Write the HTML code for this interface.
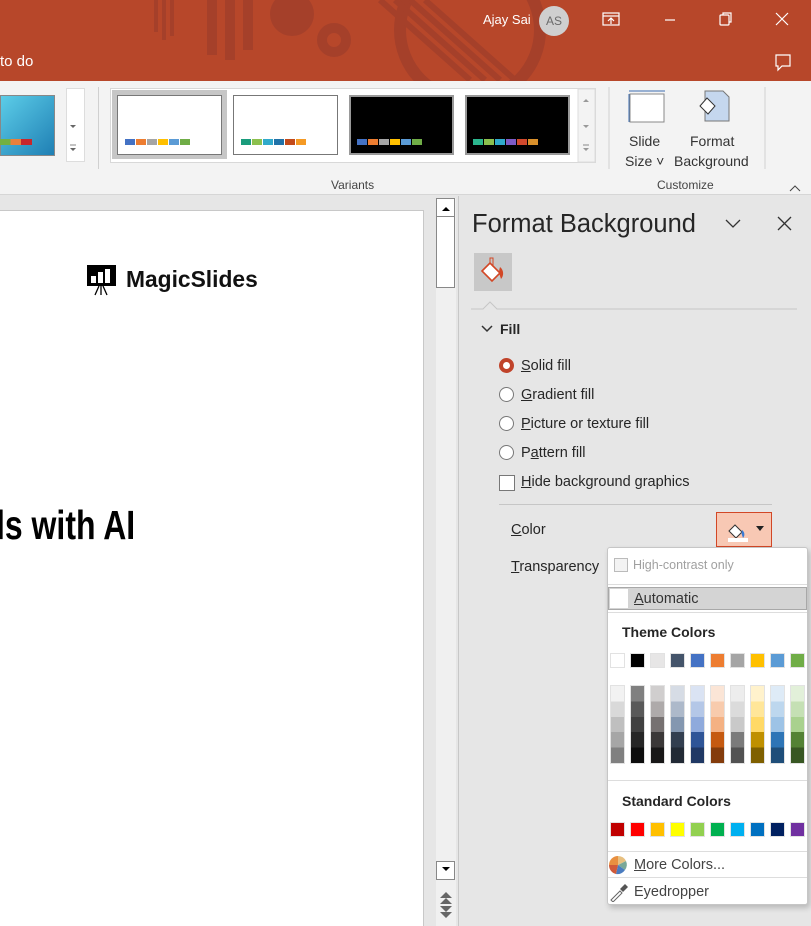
<!DOCTYPE html>
<html><head><meta charset="utf-8"><style>
*{margin:0;padding:0;box-sizing:border-box}
body{width:811px;height:926px;overflow:hidden;position:relative;font-family:"Liberation Sans",sans-serif;background:#e6e6e6;color:#262626}
.a{position:absolute}
.t{position:absolute;white-space:nowrap;font-size:14.5px;line-height:1}
.sw{position:absolute;width:15px;height:15px;border:1px solid #e2e2e2}
.radio{position:absolute;width:15px;height:15px;border-radius:50%;border:1px solid #777;background:#fff}
u{text-decoration:underline}
</style></head><body>
<div class="a" style="left:0;top:0;width:811px;height:81px;background:#b7472a;overflow:hidden">
<svg width="811" height="81" class="a" style="left:0;top:0">
<g fill="#a5402a">
<rect x="154" y="0" width="4" height="32"/><rect x="162" y="0" width="4" height="40"/><rect x="170" y="0" width="4" height="36"/>
<rect x="207" y="0" width="10" height="55"/><rect x="225" y="0" width="10" height="60"/><rect x="243" y="0" width="10" height="50"/>
<circle cx="292" cy="14" r="22"/>
</g>
<g fill="none" stroke="#a5402a">
<circle cx="334" cy="40" r="12" stroke-width="10"/>
<circle cx="470" cy="30" r="70" stroke-width="12"/>
<path d="M380 0 L470 80 M395 0 L485 80 M410 0 L500 80 M425 0 L515 80" stroke-width="6"/>
</g>
</svg>
<div class="t" style="left:0;top:54px;color:#fff;font-size:15px">to do</div>
<div class="t" style="left:483px;top:13px;color:#fff;font-size:13px">Ajay Sai</div>
<div class="a" style="left:539px;top:6px;width:30px;height:30px;border-radius:50%;background:#cfcfcf;color:#6a6a6a;font-size:12px;text-align:center;line-height:30px">AS</div>
<svg class="a" style="left:600px;top:8px" width="200" height="70" fill="none" stroke="#fff" stroke-width="1.2">
<rect x="3" y="5" width="16" height="12"/><line x1="3" y1="8" x2="19" y2="8"/><path d="M11 16V10M8 13l3-3 3 3"/>
<line x1="65" y1="12" x2="75" y2="12"/>
<rect x="120" y="7" width="9" height="10" rx="1"/><path d="M123 7V5h8v9h-2"/>
<path d="M176 5l12 12M188 5l-12 12"/>
<path d="M176 47h14v11h-8l-4 4v-4h-2z"/>
</svg>
</div>
<div class="a" style="left:0;top:81px;width:811px;height:114px;background:#f3f3f3;border-bottom:1px solid #d6d6d6">
<div class="a" style="left:0;top:14px;width:55px;height:61px;border:1px solid #888;background:linear-gradient(135deg,#5ccde8,#1f7fb4)"></div>
<div class="a" style="left:0;top:58px;width:32px;height:6px;background:linear-gradient(90deg,#73b043 0 33%,#e9803c 33% 66%,#c8262b 66%)"></div>
<div class="a" style="left:66px;top:7px;width:19px;height:74px;border:1px solid #ddd;background:#fff"></div>
<div class="a" style="left:98px;top:6px;width:1px;height:82px;background:#d0d0d0"></div>
<div class="a" style="left:110px;top:7px;width:486px;height:75px;border:1px solid #d8d8d8;background:#fff"></div>
<div class="a" style="left:112px;top:9px;width:115px;height:69px;background:#c6c6c6"></div>
<div class="a" style="left:117px;top:14px;width:105px;height:60px;background:#fff;border:1px solid #777"></div>
<div class="a" style="left:233px;top:14px;width:105px;height:60px;background:#fff;border:1px solid #777"></div>
<div class="a" style="left:349px;top:14px;width:105px;height:60px;background:#000;border:2px solid #999"></div>
<div class="a" style="left:465px;top:14px;width:105px;height:60px;background:#000;border:2px solid #999"></div>
<svg class="a" style="left:0;top:0" width="811" height="114">
<g transform="translate(125,58)"><rect width="10" height="6" fill="#4472c4"/><rect x="11" width="10" height="6" fill="#ed7d31"/><rect x="22" width="10" height="6" fill="#a5a5a5"/><rect x="33" width="10" height="6" fill="#ffc000"/><rect x="44" width="10" height="6" fill="#5b9bd5"/><rect x="55" width="10" height="6" fill="#70ad47"/></g>
<g transform="translate(241,58)"><rect width="10" height="6" fill="#1a9c7c"/><rect x="11" width="10" height="6" fill="#8cc04e"/><rect x="22" width="10" height="6" fill="#30aacb"/><rect x="33" width="10" height="6" fill="#2072a8"/><rect x="44" width="10" height="6" fill="#c34a1a"/><rect x="55" width="10" height="6" fill="#f59a24"/></g>
<g transform="translate(357,58)"><rect width="10" height="6" fill="#4472c4"/><rect x="11" width="10" height="6" fill="#ed7d31"/><rect x="22" width="10" height="6" fill="#a5a5a5"/><rect x="33" width="10" height="6" fill="#ffc000"/><rect x="44" width="10" height="6" fill="#5b9bd5"/><rect x="55" width="10" height="6" fill="#70ad47"/></g>
<g transform="translate(473,58)"><rect width="10" height="6" fill="#2bb68e"/><rect x="11" width="10" height="6" fill="#8cc04e"/><rect x="22" width="10" height="6" fill="#30aacb"/><rect x="33" width="10" height="6" fill="#7d5bc6"/><rect x="44" width="10" height="6" fill="#d1492d"/><rect x="55" width="10" height="6" fill="#d9902b"/></g>
<rect x="578" y="8" width="17" height="73" fill="#f3f3f3" stroke="#ddd"/>
<path d="M583 21h6l-3-3z M583 44h6l-3 3z M583 67h6l-3 3z" fill="#999"/><path d="M583 64h6M70 64h6" stroke="#888"/>
<path d="M70 44h6l-3 3z M70 67h6l-3 3z" fill="#666"/>
<rect x="630" y="13" width="34" height="28" fill="#fff" stroke="#888"/><path d="M629 10h36M629 13v28" stroke="#3c6db0"/>
<path d="M705 10h18l6 6v24h-24z" fill="#c5d7ee" stroke="#777"/><path d="M700 25l7-8 8 8-7 8z" fill="#fff" stroke="#333"/>
<path d="M609 6v82M765 6v82" stroke="#d0d0d0"/>
<path d="M790 110l5-5 5 5" fill="none" stroke="#444"/>
</svg>
<div class="t" style="left:629px;top:53px;font-size:14px;color:#333">Slide</div>
<div class="t" style="left:625px;top:73px;font-size:14px;color:#333">Size ˅</div>
<div class="t" style="left:690px;top:53px;font-size:14px;color:#333">Format</div>
<div class="t" style="left:674px;top:73px;font-size:14px;color:#333">Background</div>
<div class="t" style="left:331px;top:98px;font-size:12px;color:#444">Variants</div>
<div class="t" style="left:657px;top:98px;font-size:12px;color:#444">Customize</div>
</div>
<div class="a" style="left:0;top:210px;width:424px;height:716px;background:#fff;border-right:1px solid #c8c8c8;border-top:1px solid #c8c8c8"></div>
<svg class="a" style="left:86px;top:264px" width="32" height="32"><rect x="1" y="1" width="29" height="21" fill="#000"/><rect x="5" y="12" width="5" height="7" fill="#fff"/><rect x="12" y="8" width="5" height="11" fill="#fff"/><rect x="19" y="5" width="5" height="14" fill="#fff"/><path d="M15 22v9M13 22l-4 9M17 22l4 9" stroke="#000" stroke-width="1.3"/></svg>
<div class="t" style="left:126px;top:268px;font-size:22.8px;font-weight:bold;color:#111">MagicSlides</div>
<div class="t" style="left:-4px;top:505px;font-family:'Liberation Sans',sans-serif;font-weight:bold;font-size:41px;color:#000;transform:scaleX(.78);transform-origin:left">ls with AI</div>
<div class="a" style="left:436px;top:198px;width:20px;height:728px;background:#f0f0f0"></div>
<div class="a" style="left:436px;top:198px;width:19px;height:90px;background:#fff;border:1px solid #888"></div>
<div class="a" style="left:437px;top:216px;width:17px;height:1px;background:#888"></div>
<div class="a" style="left:436px;top:861px;width:19px;height:19px;background:#fff;border:1px solid #888"></div>
<svg class="a" style="left:436px;top:198px" width="20" height="728"><path d="M6 13h8l-4-4zM6 669h8l-4 4z" fill="#000"/><path d="M4 700l6-6 6 6zM4 706l6-6 6 6zM4 708l6 6 6-6zM4 714l6 6 6-6z" fill="#666"/></svg>
<div class="a" style="left:458px;top:196px;width:1px;height:730px;background:#c8c8c8"></div>
<div class="t" style="left:472px;top:212px;font-size:25.5px;color:#262626">Format Background</div>
<svg class="a" style="left:720px;top:212px" width="80" height="25" fill="none" stroke="#333" stroke-width="1.3"><path d="M6 8l7 7 7-7M58 5l13 13M71 5L58 18"/></svg>
<div class="a" style="left:474px;top:253px;width:38px;height:38px;background:#c8c8c8"></div>
<svg class="a" style="left:474px;top:253px" width="38" height="38"><path d="M8 18l8-8 10 10-8 8z" fill="#fff" stroke="#d24726" stroke-width="1.6"/><path d="M16 10V5h3v9" fill="none" stroke="#d24726"/><path d="M26 14c4 3 4 9 1 12-1-4-3-6-1-12z" fill="#d24726"/></svg>
<svg class="a" style="left:470px;top:296px" width="330" height="16"><path d="M1 13h12l7-7 7 7h300" fill="none" stroke="#c6c6c6"/></svg>
<svg class="a" style="left:480px;top:322px" width="14" height="14"><path d="M2 4l5 5 5-5" fill="none" stroke="#333" stroke-width="1.5"/></svg>
<div class="t" style="left:500px;top:322px;font-weight:bold;font-size:14px">Fill</div>
<div class="radio" style="left:499px;top:358px;border:4px solid #c0432a"></div>
<div class="radio" style="left:499px;top:387px"></div>
<div class="radio" style="left:499px;top:416px"></div>
<div class="radio" style="left:499px;top:445px"></div>
<div class="a" style="left:499px;top:475px;width:16px;height:16px;border:1px solid #777;background:#fff"></div>
<div class="t" style="left:521px;top:359px"><u>S</u>olid fill</div>
<div class="t" style="left:521px;top:388px"><u>G</u>radient fill</div>
<div class="t" style="left:521px;top:417px"><u>P</u>icture or texture fill</div>
<div class="t" style="left:521px;top:446px">P<u>a</u>ttern fill</div>
<div class="t" style="left:521px;top:475px"><u>H</u>ide background graphics</div>
<div class="a" style="left:499px;top:504px;width:273px;height:1px;background:#c6c6c6"></div>
<div class="t" style="left:511px;top:523px"><u>C</u>olor</div>
<div class="t" style="left:511px;top:560px"><u>T</u>ransparency</div>
<div class="a" style="left:716px;top:512px;width:56px;height:35px;background:#f8c8b4;border:1px solid #d24726"></div>
<svg class="a" style="left:716px;top:512px" width="56" height="35"><path d="M13 19l6-6 7 7-6 6z" fill="#fff" stroke="#333"/><path d="M26 18c3 2 3 6 1 8-1-3-2-5-1-8z" fill="#3a7bd5"/><rect x="12" y="26" width="20" height="4" fill="#fff"/><path d="M40 14h8l-4 5z" fill="#222"/></svg>
<div class="a" style="left:607px;top:547px;width:201px;height:358px;background:#fff;border:1px solid #c6c6c6;border-radius:3px;box-shadow:2px 3px 6px rgba(0,0,0,.2)"></div>
<div class="a" style="left:614px;top:558px;width:14px;height:14px;border:1px solid #bbb;background:#f3f3f3"></div>
<div class="t" style="left:633px;top:559px;font-size:12.5px;color:#a0a0a0">High-contrast only</div>
<div class="a" style="left:608px;top:584px;width:199px;height:1px;background:#ddd"></div>
<div class="a" style="left:608px;top:587px;width:199px;height:23px;background:#d4d4d4;border:1px solid #a8a8a8"></div>
<div class="a" style="left:610px;top:589px;width:18px;height:19px;background:#fff"></div>
<div class="t" style="left:634px;top:592px;color:#333"><u>A</u>utomatic</div>
<div class="a" style="left:608px;top:612px;width:199px;height:1px;background:#ddd"></div>
<div class="t" style="left:622px;top:625px;font-weight:bold;font-size:14px;color:#262626">Theme Colors</div>
<div class="a" style="left:608px;top:780px;width:199px;height:1px;background:#ddd"></div>
<div class="t" style="left:622px;top:794px;font-weight:bold;font-size:14px;color:#262626">Standard Colors</div>
<div class="a" style="left:608px;top:851px;width:199px;height:1px;background:#ddd"></div>
<svg class="a" style="left:608px;top:855px" width="22" height="22"><g transform="translate(10,10)"><path d="M0 0L0-9A9 9 0 0 1 8-4z" fill="#e8c080"/><path d="M0 0L8-4A9 9 0 0 1 7 5z" fill="#7aa898"/><path d="M0 0L7 5A9 9 0 0 1-2 9z" fill="#4a7cc0"/><path d="M0 0L-2 9A9 9 0 0 1-9 0z" fill="#d05a3a"/><path d="M0 0L-9 0A9 9 0 0 1 0-9z" fill="#e89040"/></g></svg>
<div class="t" style="left:634px;top:858px;color:#444"><u>M</u>ore Colors...</div>
<div class="a" style="left:608px;top:877px;width:199px;height:1px;background:#ddd"></div>
<svg class="a" style="left:608px;top:882px" width="22" height="20"><path d="M3 18l9-9 2 2-9 9z" fill="none" stroke="#666"/><path d="M12 7l5-5 3 3-5 5z" fill="#555"/></svg>
<div class="t" style="left:634px;top:885px;color:#444">Eyedropper</div>
<div id="sw"></div>
<script>
var th=["#ffffff","#000000","#e7e6e6","#44546a","#4472c4","#ed7d31","#a5a5a5","#ffc000","#5b9bd5","#70ad47"];
var ti=[["#f2f2f2","#d9d9d9","#bfbfbf","#a6a6a6","#808080"],["#808080","#595959","#404040","#262626","#0d0d0d"],["#d0cece","#aeaaaa","#767171","#3b3838","#181717"],["#d6dce5","#adb9ca","#8497b0","#333f50","#222a35"],["#dae3f3","#b4c7e7","#8faadc","#2f5597","#203864"],["#fbe5d6","#f8cbad","#f4b183","#c55a11","#843c0c"],["#ededed","#dbdbdb","#c9c9c9","#7b7b7b","#525252"],["#fff2cc","#ffe699","#ffd966","#bf9000","#7f6000"],["#deebf7","#bdd7ee","#9dc3e6","#2e75b6","#1f4e79"],["#e2f0d9","#c5e0b4","#a9d18e","#548235","#385723"]];
var st=["#c00000","#ff0000","#ffc000","#ffff00","#92d050","#00b050","#00b0f0","#0070c0","#002060","#7030a0"];
var h="";
for(var i=0;i<10;i++){var x=610+20*i;
h+='<div class="sw" style="left:'+x+'px;top:653px;background:'+th[i]+'"></div>';
h+='<div class="sw" style="left:'+x+'px;top:822px;background:'+st[i]+'"></div>';
h+='<div class="a" style="left:'+x+'px;top:685px;width:15px;height:79px;border:1px solid #e2e2e2;background:linear-gradient('+ti[i].map(function(c,k){return c+' '+(k*20)+'% '+((k+1)*20)+'%'}).join(',')+')"></div>';}
document.getElementById("sw").innerHTML=h;
</script>
</body></html>
